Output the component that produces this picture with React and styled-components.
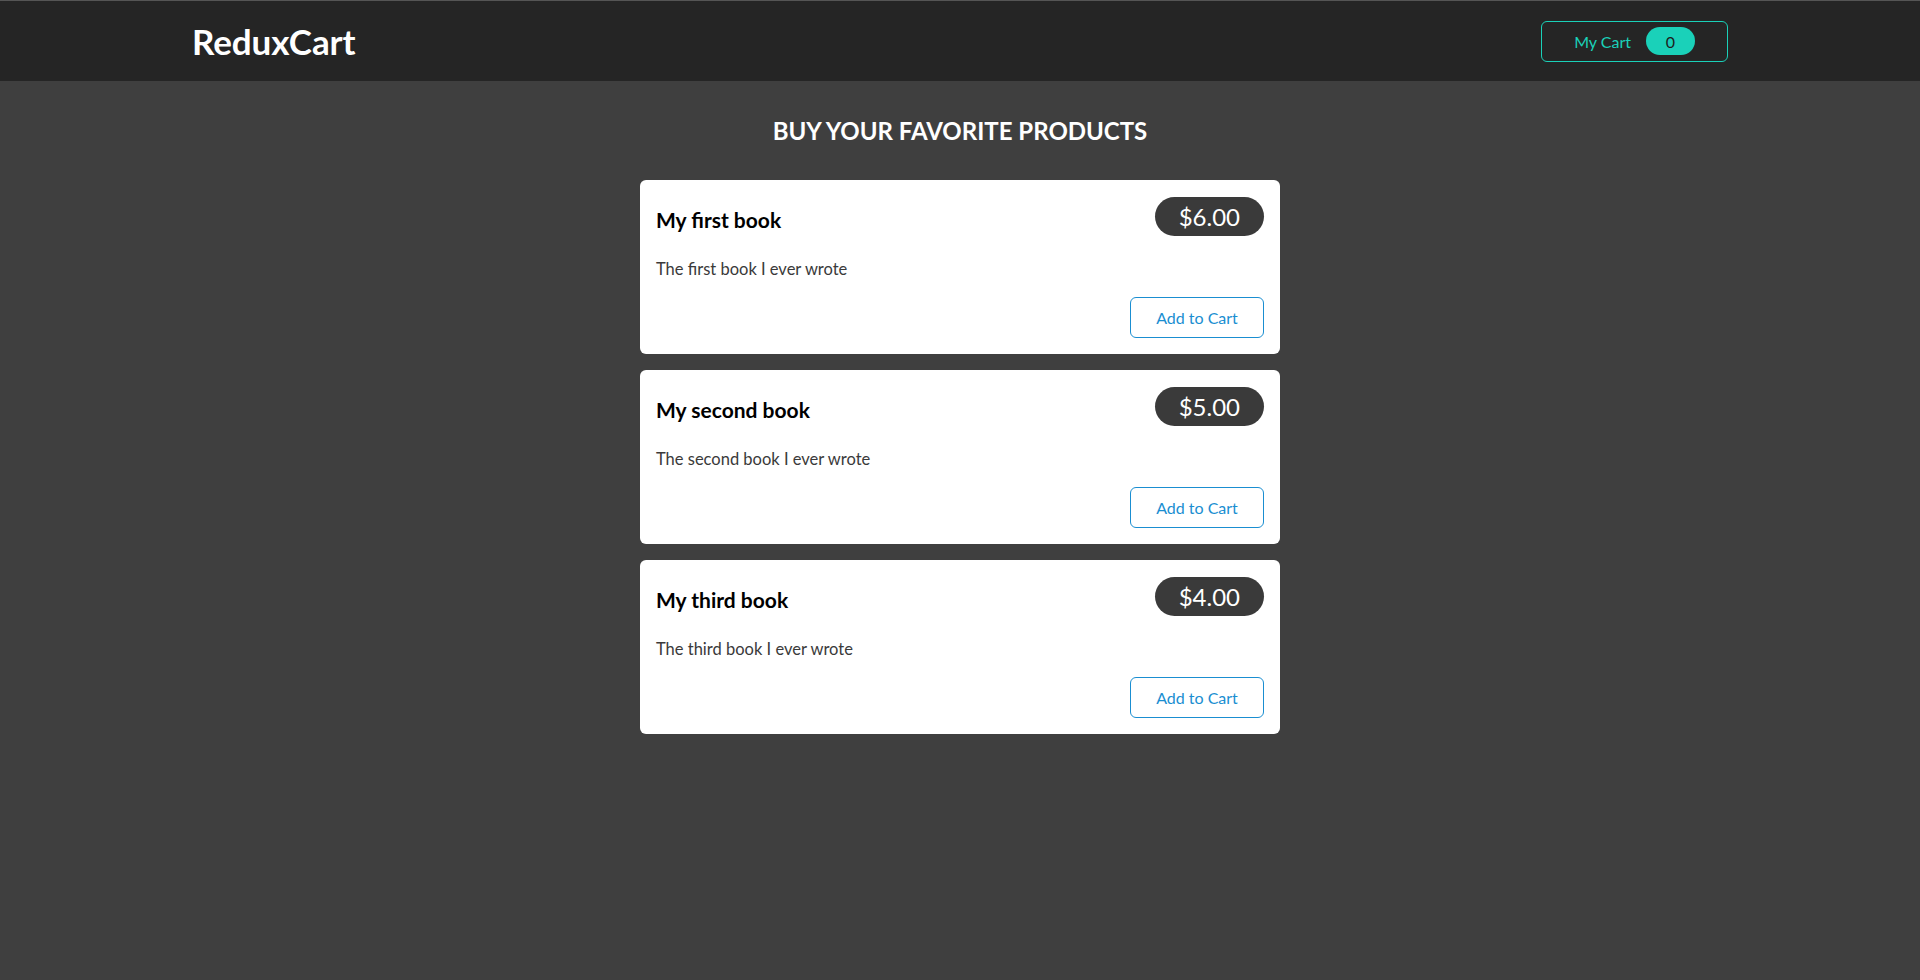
import React, { useState } from 'react';
import styled, { createGlobalStyle } from 'styled-components';

const GlobalStyle = createGlobalStyle`
  * {
    box-sizing: border-box;
  }

  html, body {
    margin: 0;
    padding: 0;
  }

  body {
    font-family: Lato, "Noto Sans", sans-serif;
    background-color: #3f3f3f;
    min-height: 980px;
  }
`;

const Header = styled.header`
  width: 100%;
  height: 81px;
  padding: 0 10%;
  background-color: #252525;
  border-top: 1px solid #555;
  display: flex;
  justify-content: space-between;
  align-items: center;
`;

const Logo = styled.h1`
  margin: 0;
  color: #fff;
  font-size: 35px;
  font-weight: 700;
  letter-spacing: -0.1px;
`;

const CartButton = styled.button`
  display: flex;
  align-items: center;
  height: 41px;
  padding: 0 32px;
  font: inherit;
  font-size: 16px;
  background-color: transparent;
  border: 1px solid #1ad1b9;
  border-radius: 6px;
  color: #1ad1b9;
  cursor: pointer;
`;

const Badge = styled.span`
  display: inline-flex;
  align-items: center;
  justify-content: center;
  width: 49px;
  height: 28px;
  margin-left: 15px;
  border-radius: 30px;
  background-color: #1ad1b9;
  color: #1d1d1d;
`;

const Main = styled.main`
  width: 640px;
  margin: 0 auto;
  padding-top: 35px;
`;

const Title = styled.h2`
  margin: 0 0 34px;
  line-height: 30px;
  text-align: center;
  text-transform: uppercase;
  color: #fff;
  font-size: 24px;
  font-weight: 700;
`;

const List = styled.ul`
  list-style: none;
  margin: 0;
  padding: 0;
  display: flex;
  flex-direction: column;
  gap: 16px;
`;

const Card = styled.li`
  background-color: #fff;
  border-radius: 6px;
  padding: 16px;
`;

const CardHeader = styled.div`
  display: flex;
  justify-content: space-between;
  align-items: center;
  height: 40px;
`;

const ItemTitle = styled.h3`
  margin: 6px 0 0;
  font-size: 21px;
  font-weight: 700;
  color: #000;
`;

const Price = styled.div`
  display: flex;
  align-items: center;
  height: 39px;
  padding: 0 24px;
  border-radius: 30px;
  background-color: #3a3a3a;
  color: #fff;
  font-size: 24px;
  margin-top: 1px;
`;

const Description = styled.p`
  margin: 21px 0 16px;
  line-height: 24px;
  color: #3a3a3a;
  font-size: 16.5px;
`;

const Actions = styled.div`
  display: flex;
  justify-content: flex-end;
`;

const AddButton = styled.button`
  width: 134px;
  height: 41px;
  font: inherit;
  font-size: 16px;
  background-color: transparent;
  border: 1px solid #1a8ed1;
  border-radius: 6px;
  color: #1a8ed1;
  cursor: pointer;

  &:hover {
    background-color: #1a8ed1;
    color: #fff;
  }
`;

const products = [
  { id: 'p1', title: 'My first book', price: 6, description: 'The first book I ever wrote' },
  { id: 'p2', title: 'My second book', price: 5, description: 'The second book I ever wrote' },
  { id: 'p3', title: 'My third book', price: 4, description: 'The third book I ever wrote' },
];

const ProductItem = ({ title, price, description, onAdd }) => (
  <Card>
    <CardHeader>
      <ItemTitle>{title}</ItemTitle>
      <Price>${price.toFixed(2)}</Price>
    </CardHeader>
    <Description>{description}</Description>
    <Actions>
      <AddButton onClick={onAdd}>Add to Cart</AddButton>
    </Actions>
  </Card>
);

const App = () => {
  const [count, setCount] = useState(0);

  return (
    <>
      <GlobalStyle />
      <Header>
        <Logo>ReduxCart</Logo>
        <CartButton>
          <span>My Cart</span>
          <Badge>{count}</Badge>
        </CartButton>
      </Header>
      <Main>
        <Title>Buy your favorite products</Title>
        <List>
          {products.map((p) => (
            <ProductItem
              key={p.id}
              title={p.title}
              price={p.price}
              description={p.description}
              onAdd={() => setCount((c) => c + 1)}
            />
          ))}
        </List>
      </Main>
    </>
  );
};

export default App;
